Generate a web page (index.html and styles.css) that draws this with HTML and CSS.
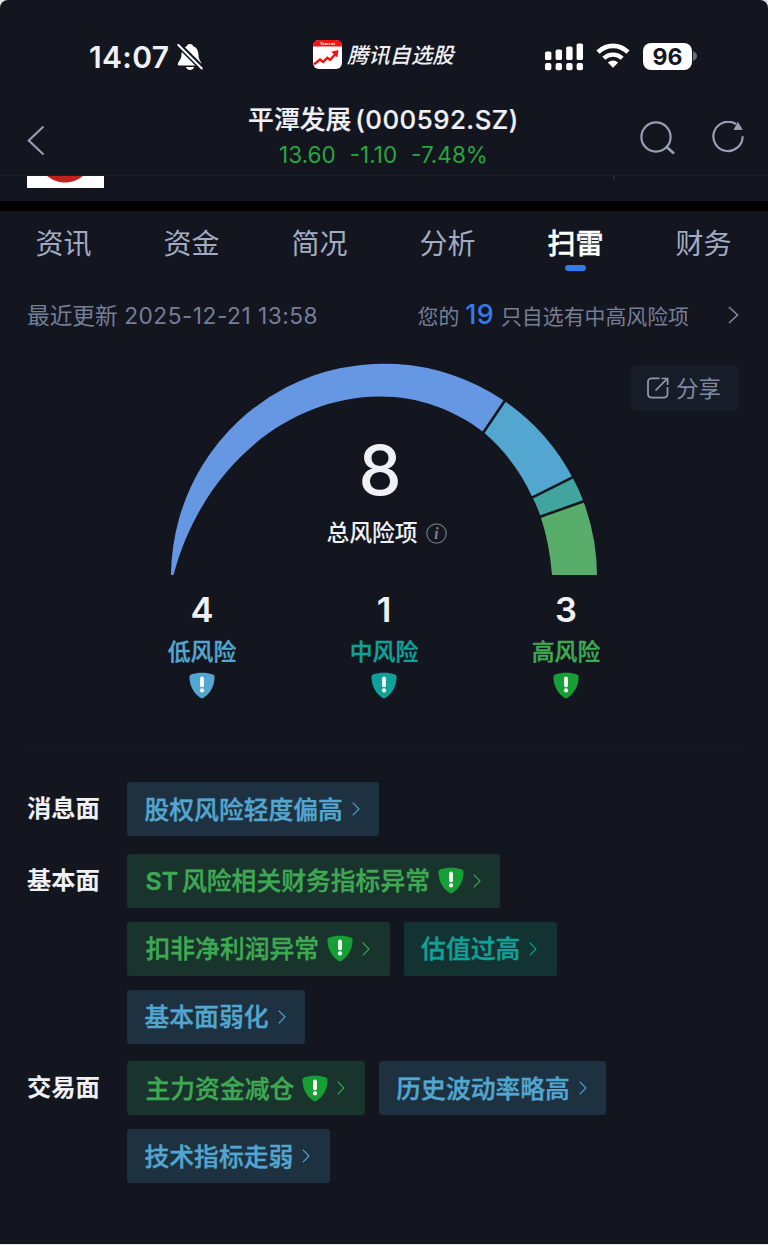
FILE: index.html
```html
<!DOCTYPE html>
<html lang="zh-CN">
  <head>
    <meta charset="UTF-8" />
    <meta name="viewport" content="width=device-width, initial-scale=1.0" />
    <title>平潭发展(000592.SZ)</title>
    <link rel="stylesheet" href="styles.css">
  </head>
  <body>
    <svg class="symbols" width="0" height="0">
      <symbol id="shield" viewBox="0 0 26 27">
        <path d="M2 2.6C9 0 17 0 24 2.6Q25.6 3.2 25.6 5C25.4 15 20.5 22 14.3 26Q13 26.8 11.7 26C5.5 22 .6 15 .4 5Q.4 3.2 2 2.6Z" fill="currentColor" />
        <path d="M13 6.4V13.4" stroke="#fff" stroke-width="3.8" stroke-linecap="round" />
        <circle cx="13" cy="18.4" r="2.1" fill="#fff" />
      </symbol>
      <symbol id="arrow" viewBox="0 0 8 14">
        <path d="M.7.7L7 7L.7 13.3" fill="none" stroke="currentColor" stroke-width="1.1" />
      </symbol>
    </svg>

    <div class="page">
      <div class="status-bar">
        <div class="clock">14:07</div>
        <svg class="bell" width="26" height="28" viewBox="0 0 26 28">
          <path d="M13 1C15 1 16 2 16.3 3.3C20.5 5 21.3 8.5 21.5 12.5C21.8 17.5 24.5 18.5 24.5 21.5Q24.5 22.5 23.2 22.5H2.2Q.8 22.5.8 21.3C.8 18.5 4 17.5 4.4 12.5C4.6 8.5 5.5 5 9.7 3.3C10 2 11 1 13 1Z" fill="#fff" />
          <path d="M8.8 24H17.2Q16 27 13 27T8.8 24Z" fill="#fff" />
          <path d="M2.8 1.2L26 24.4" stroke="#13161f" stroke-width="3" />
          <path d="M1.3 2L24.8 25.5" stroke="#13161f" stroke-width="5" />
          <path d="M1.3 2L24.8 25.5" stroke="#fff" stroke-width="1.9" stroke-linecap="round" />
        </svg>
        <div class="app">
          <svg width="29" height="29" viewBox="0 0 29 29">
            <rect width="29" height="29" rx="6" fill="#fff" />
            <path d="M0 6.5V6Q0 0 6 0H23Q29 0 29 6V6.5Z" fill="#f31212" />
            <text x="14.5" y="5.2" class="app-brand">Tencent</text>
            <path d="M1 24.2L7 19.6L10.2 22L14.2 17.8L17 19.8L22.5 14" fill="none" stroke="#f31212" stroke-width="2.4" />
            <path d="M18.2 11.8L25.4 10L24.4 17.4Z" fill="#f31212" />
          </svg>
          <span>腾讯自选股</span>
        </div>
        <svg class="signal" width="39" height="28" viewBox="0 0 39 28" fill="#fff">
          <rect x="0" y="8.6" width="6.4" height="8.4" rx="1.6" />
          <rect x="10.6" y="6.6" width="6.4" height="10.4" rx="1.6" />
          <rect x="21.2" y="3.6" width="6.4" height="13.4" rx="1.6" />
          <rect x="31.6" y="0.6" width="6.4" height="16.4" rx="1.6" />
          <rect x="0" y="20" width="6.4" height="7.2" rx="2" />
          <rect x="10.6" y="20" width="6.4" height="7.2" rx="2" />
          <rect x="21.2" y="20" width="6.4" height="7.2" rx="2" />
          <rect x="31.6" y="20" width="6.4" height="7.2" rx="2" />
        </svg>
        <svg class="wifi" width="34" height="26" viewBox="0 0 34 26">
          <path d="M2 9.2C10.5.8 23.5.8 32 9.2" fill="none" stroke="#fff" stroke-width="4.6" />
          <path d="M7.8 15.3C13 10.3 21 10.3 26.2 15.3" fill="none" stroke="#fff" stroke-width="4.3" />
          <path d="M11.8 19.5Q17 15.3 22.2 19.5L17 24.8Z" fill="#fff" />
        </svg>
        <div class="battery">96</div>
        <svg class="battery-cap" width="4" height="10" viewBox="0 0 4 10"><path d="M0 0Q4 2 4 5T0 10Z" fill="#6d6f76" /></svg>
      </div>

      <div class="navbar">
        <svg class="back" width="18" height="31" viewBox="0 0 18 31">
          <path d="M16.5 1.5L1.8 15.5L16.5 29.5" fill="none" stroke="#929cb3" stroke-width="2.2" />
        </svg>
        <div class="quote">
          <div class="quote-name">平潭发展<span>(000592.SZ)</span></div>
          <div class="quote-price"><span>13.60</span><span>-1.10</span><span>-7.48%</span></div>
        </div>
        <div class="nav-icons">
          <svg width="36" height="34" viewBox="0 0 36 34" fill="none" stroke="#98a1b7" stroke-width="2.2">
            <circle cx="16" cy="16" r="14.6" />
            <path d="M26 25.5L34 32.5" stroke-width="2.6" />
          </svg>
          <svg width="32" height="34" viewBox="0 0 32 34">
            <path d="M24 3.2A14.6 14.6 0 1 0 30.6 15.3" fill="none" stroke="#98a1b7" stroke-width="2.2" />
            <path d="M25.8 .8L30.8 8.8L21.5 9Z" fill="#98a1b7" />
          </svg>
        </div>
      </div>

      <div class="banner">
        <div class="banner-pic"></div>
        <div class="banner-tick"></div>
      </div>

      <div class="tabs">
        <div class="tab">资讯</div>
        <div class="tab">资金</div>
        <div class="tab">简况</div>
        <div class="tab">分析</div>
        <div class="tab active">扫雷</div>
        <div class="tab">财务</div>
      </div>

      <div class="update">
        <div class="update-time">最近更新 <span>2025-12-21 13:58</span></div>
        <div class="update-tip">您的 <b>19</b> 只自选有中高风险项</div>
        <svg width="11" height="18" viewBox="0 0 11 18"><path d="M1 1L9.5 9L1 17" fill="none" stroke="#7d859c" stroke-width="1.7" /></svg>
      </div>

      <div class="gauge">
        <svg class="gauge-arc" width="428" height="213" viewBox="170 362 428 213">
          <path d="M171 575A213 213 0 0 1 504.5 401L484 432.5C453 409 418 396.6 380 396.6C290 396.6 203 465 173.5 575Z" fill="#6597e3" />
          <path d="M504.5 401A213 213 0 0 1 572.5 477.5L532.5 497.5A190 190 0 0 0 484 432.5Z" fill="#52a6cf" />
          <path d="M572.5 477.5Q579 489 583.5 501.5L540.5 516.5Q537.500 507 532.5 497.5Z" fill="#42a49f" />
          <path d="M583.5 501.5A213 213 0 0 1 597 575H552Q549.5 543 540.5 516.5Z" fill="#57ad69" />
          <g stroke="#13161f" stroke-width="2.6">
            <path d="M506 399L482 434.5" />
            <path d="M575 476.2L530 498.6" />
            <path d="M586 500.6L538 517.4" />
          </g>
        </svg>
        <div class="gauge-text">
          <div class="total">8</div>
          <div class="total-label">总风险项
            <svg width="21" height="21" viewBox="0 0 21 21">
              <circle cx="10.5" cy="10.5" r="9.7" fill="none" stroke="#6b707c" stroke-width="1.3" />
              <text x="10.3" y="16" class="info-i">i</text>
            </svg>
          </div>
        </div>
        <div class="share">
          <svg width="22" height="22" viewBox="0 0 22 22" fill="none" stroke="#9399aa" stroke-width="1.7">
            <path d="M12.5 1.3H5Q1 1.3 1 5V17Q1 20.6 5 20.6H16.5Q20.5 20.6 20.5 17V10" />
            <path d="M8.5 13.5L20 1.8M14.5 1.5H20.6V8" />
          </svg>
          <span>分享</span>
        </div>
      </div>

      <div class="stats">
        <div class="stat low">
          <b>4</b><span>低风险</span>
          <svg class="shield"><use href="#shield" /></svg>
        </div>
        <div class="stat mid">
          <b>1</b><span>中风险</span>
          <svg class="shield"><use href="#shield" /></svg>
        </div>
        <div class="stat high">
          <b>3</b><span>高风险</span>
          <svg class="shield"><use href="#shield" /></svg>
        </div>
      </div>

      <div class="groups">
        <div class="group">
          <div class="group-name">消息面</div>
          <div class="chips">
            <div class="chip low"><span>股权风险轻度偏高</span><svg class="arrow"><use href="#arrow" /></svg></div>
          </div>
        </div>
        <div class="group">
          <div class="group-name">基本面</div>
          <div class="chips">
            <div class="chip high"><span><i>ST</i>风险相关财务指标异常</span><svg class="shield"><use href="#shield" /></svg><svg class="arrow"><use href="#arrow" /></svg></div>
            <div class="chip high"><span>扣非净利润异常</span><svg class="shield"><use href="#shield" /></svg><svg class="arrow"><use href="#arrow" /></svg></div>
            <div class="chip mid"><span>估值过高</span><svg class="arrow"><use href="#arrow" /></svg></div>
            <div class="chip low"><span>基本面弱化</span><svg class="arrow"><use href="#arrow" /></svg></div>
          </div>
        </div>
        <div class="group">
          <div class="group-name">交易面</div>
          <div class="chips">
            <div class="chip high"><span>主力资金减仓</span><svg class="shield"><use href="#shield" /></svg><svg class="arrow"><use href="#arrow" /></svg></div>
            <div class="chip low"><span>历史波动率略高</span><svg class="arrow"><use href="#arrow" /></svg></div>
            <div class="chip low"><span>技术指标走弱</span><svg class="arrow"><use href="#arrow" /></svg></div>
          </div>
        </div>
      </div>
    </div>
  </body>
</html>
```

FILE: styles.css
```css
* {
  box-sizing: border-box;
}

body {
  margin: 0;
  background-color: #e4e5e7;
  font-family: Inter, "Noto Sans CJK SC", sans-serif;
  color: #f0f1f6;
}

svg {
  display: block;
  flex-shrink: 0;
}

.symbols {
  position: absolute;
}

.page {
  height: 1244px;
  background-color: #13161f;
  border-radius: 8px 8px 0 0;
  overflow: hidden;
  white-space: nowrap;
}

/* status bar */
.status-bar {
  display: flex;
  align-items: center;
  height: 96px;
  padding: 16px 0 0 89px;
}

.clock {
  width: 80px;
  padding-top: 2px;
  font-size: 30px;
  font-weight: 600;
  line-height: 36px;
  letter-spacing: 0.3px;
}

.bell {
  margin: 2px 0 0 8px;
}

.app {
  display: flex;
  align-items: center;
  gap: 5px;
  width: 147px;
  margin: -3px 0 0 110px;
}

.app span {
  padding-top: 1px;
  font-size: 21.3px;
  font-weight: 500;
  font-style: italic;
  line-height: 29px;
}

.app-brand {
  font-family: "Liberation Serif", serif;
  font-size: 4.5px;
  font-weight: bold;
  text-anchor: middle;
  fill: #fff;
}

.signal {
  margin: 1px 0 0 85px;
}

.wifi {
  margin-left: 12px;
}

.battery {
  width: 49px;
  height: 27px;
  margin-left: 13px;
  padding-top: 1px;
  border-radius: 8px;
  background-color: #fff;
  color: #13161f;
  font-size: 23px;
  font-weight: 700;
  line-height: 26px;
  text-align: center;
}

.battery-cap {
  margin-left: 1px;
}

/* title */
.navbar {
  display: grid;
  grid-template-columns: 1fr auto 1fr;
  height: 80px;
  padding: 0 24px 0 27px;
  border-bottom: 1px solid #1a1e29;
}

.back {
  margin-top: 29px;
}

.quote {
  margin-left: -4px;
  text-align: center;
}

.quote-name {
  margin-top: 6px;
  font-size: 25.8px;
  font-weight: 500;
  line-height: 36px;
  -webkit-text-stroke: 0.2px;
}

.quote-name span {
  margin-left: 4px;
  letter-spacing: 0.5px;
}

.quote-price {
  display: flex;
  justify-content: center;
  gap: 14px;
  font-size: 22.5px;
  line-height: 34px;
  color: #27a63c;
}

.nav-icons {
  display: flex;
  justify-content: flex-end;
  gap: 36px;
  padding-top: 25px;
}

.banner {
  display: flex;
  justify-content: space-between;
  height: 35px;
  padding: 0 153px 0 27px;
  border-bottom: 10px solid #000;
}

.banner-pic {
  width: 77px;
  height: 12px;
  background: radial-gradient(circle at 38px -21px, #c2201c 27px, #fff 28px);
}

.banner-tick {
  width: 2px;
  height: 3px;
  background-color: #252a38;
}

/* tabs */
.tabs {
  display: grid;
  grid-template-columns: repeat(6, 1fr);
  height: 71px;
}

.tab {
  padding: 13px 1px 0 0;
  font-size: 28px;
  line-height: 40px;
  text-align: center;
  color: #a2abc3;
}

.tab.active {
  font-weight: 500;
  color: #fff;
  -webkit-text-stroke: 0.4px;
}

.tab.active::after {
  content: "";
  display: block;
  width: 21px;
  height: 6px;
  margin: 1px auto 0;
  border-radius: 3px;
  background-color: #3379f0;
}

.update {
  display: flex;
  align-items: center;
  height: 66px;
  padding: 0 29px 0 27px;
  color: #757e97;
}

.update-time {
  padding-bottom: 2px;
  font-size: 22.7px;
}

.update-time span {
  letter-spacing: 0.5px;
}

.update-tip {
  margin-left: auto;
  margin-right: 39px;
  padding-bottom: 2px;
  font-size: 20.9px;
}

.update-tip b {
  margin-right: 1px;
  font-size: 27px;
  font-weight: 500;
  color: #3379f0;
  letter-spacing: 0.3px;
}

/* gauge */
.gauge {
  position: relative;
  height: 227px;
  padding-top: 14px;
}

.gauge-arc {
  margin-left: 170px;
}

.gauge-text {
  position: absolute;
  top: 80px;
  left: 0;
  right: 0;
  text-align: center;
}

.total {
  margin-right: 8px;
  padding-top: 1px;
  font-size: 68.5px;
  font-weight: 500;
  line-height: 83px;
}

.total-label {
  display: flex;
  align-items: center;
  justify-content: center;
  gap: 8px;
  margin: 4px 0 0 5px;
  font-size: 22.8px;
  font-weight: 500;
  line-height: 34px;
}

.info-i {
  font-family: "Liberation Serif", serif;
  font-size: 17px;
  font-style: italic;
  font-weight: bold;
  text-anchor: middle;
  fill: #777c88;
}

.share {
  position: absolute;
  top: 17px;
  right: 29px;
  display: flex;
  align-items: center;
  gap: 7px;
  width: 108px;
  height: 46px;
  padding-left: 16px;
  border-radius: 4px;
  background-color: #171d28;
  color: #8189a0;
  font-size: 22.5px;
}

.share span {
  padding-bottom: 2px;
}

/* risk counts */
.low {
  color: #52a6cf;
}

.mid {
  color: #10a298;
}

.high {
  color: #3ea952;
}

.high .shield {
  color: #159f34;
}

.stats {
  display: grid;
  grid-template-columns: repeat(3, 182px);
  justify-content: center;
  height: 171px;
  margin: 0 27px;
  border-bottom: 1px solid #181b25;
}

.stat {
  display: flex;
  flex-direction: column;
  align-items: center;
}

.stat b {
  margin-top: 14px;
  font-size: 34.5px;
  font-weight: 600;
  line-height: 42px;
  color: #f0f1f6;
}

.stat span {
  margin-top: 4px;
  font-size: 22.8px;
  font-weight: 500;
  line-height: 34px;
  -webkit-text-stroke: 0.4px;
}

.stat .shield {
  margin-top: 3px;
}

.shield {
  width: 26px;
  height: 27px;
}

.arrow {
  width: 8px;
  height: 14px;
}

/* risk list */
.groups {
  display: flex;
  flex-direction: column;
  gap: 17.5px;
  padding: 36px 27px 0;
}

.group {
  display: flex;
}

.group-name {
  flex: 0 0 100px;
  font-size: 24.3px;
  font-weight: 700;
  line-height: 53px;
}

.chips {
  display: flex;
  flex-wrap: wrap;
  gap: 14px;
  max-width: 500px;
}

.chip {
  display: flex;
  align-items: center;
  gap: 9px;
  height: 54px;
  padding: 0 19.5px 0 17.5px;
  border-radius: 3px;
  font-size: 24.8px;
  font-weight: 500;
  -webkit-text-stroke: 0.4px;
}

.chip span {
  padding-bottom: 3px;
}

.chip i {
  margin-right: 4px;
  font-style: normal;
  font-weight: 600;
}

.chip .shield {
  margin-left: -1px;
}

.chip.high {
  padding-left: 18.5px;
  background-color: #19332d;
}

.chip.low {
  background-color: #1e3140;
}

.chip.mid {
  background-color: #133332;
}
```
